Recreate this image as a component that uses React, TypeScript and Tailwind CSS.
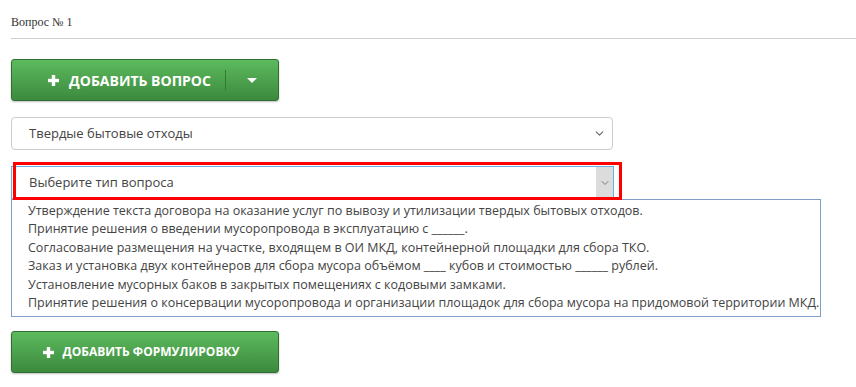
import { ChevronDown } from 'lucide-react';

const options = [
    'Утверждение текста договора на оказание услуг по вывозу и утилизации твердых бытовых отходов.',
    'Принятие решения о введении мусоропровода в эксплуатацию с ______.',
    'Согласование размещения на участке, входящем в ОИ МКД, контейнерной площадки для сбора ТКО.',
    'Заказ и установка двух контейнеров для сбора мусора объёмом ____ кубов и стоимостью ______ рублей.',
    'Установление мусорных баков в закрытых помещениях с кодовыми замками.',
    'Принятие решения о консервации мусоропровода и организации площадок для сбора мусора на придомовой территории МКД.',
];

function Plus() {
    return (
        <svg width="11" height="11" viewBox="0 0 11 11" className="shrink-0">
            <rect x="3.8" y="0" width="3.4" height="11" fill="#fff" />
            <rect x="0" y="3.8" width="11" height="3.4" fill="#fff" />
        </svg>
    );
}

function GreenButton({ children, className = '' }: { children: React.ReactNode; className?: string }) {
    return (
        <div
            className={`flex h-[42px] w-[268px] items-center rounded-[3px] border border-[#2f6f30] bg-gradient-to-b from-[#5dba5e] to-[#3c8a3d] font-['Open_Sans',sans-serif] font-bold uppercase text-white shadow-[0_1px_2px_rgba(0,0,0,0.25)] ${className}`}
        >
            {children}
        </div>
    );
}

export default function App() {
    return (
        <div className="min-h-[387px] w-[856px] bg-white pl-[11px] font-['Open_Sans',sans-serif] text-[12.5px] text-[#444]">
            <div className="pt-[14px] font-['Liberation_Serif',serif] text-[12px] leading-[16px] text-[#333]">Вопрос № 1</div>
            <div className="mt-[8px] h-px w-full bg-[#d0d0d0]" />

            <GreenButton className="mt-[20px]">
                <div className="flex flex-1 items-center justify-center gap-[10px] pl-[22px] text-[14px]">
                    <Plus />
                    <span>Добавить вопрос</span>
                </div>
                <div className="h-[20px] w-px bg-[#2f7a30]" />
                <div className="flex w-[52px] items-center justify-center">
                    <svg width="10" height="5" viewBox="0 0 10 5">
                        <path d="M0 0h10L5 5z" fill="#fff" />
                    </svg>
                </div>
            </GreenButton>

            <div className="mt-[16px] flex h-[33px] w-[602px] items-center justify-between rounded-[4px] border border-[#ccc] pl-[17px] pr-[6px] text-[13px]">
                <span>Твердые бытовые отходы</span>
                <ChevronDown size={13} strokeWidth={2} color="#666" />
            </div>

            <div className="relative mt-[16px] w-[810px]">
                <div className="flex h-[33px] w-[603px] items-stretch border border-[#66afe9] text-[13px]">
                    <span className="flex flex-1 items-center pl-[17px]">Выберите тип вопроса</span>
                    <span className="flex w-[17px] items-center justify-center bg-[#dcdcdc]">
                        <ChevronDown size={12} strokeWidth={2} color="#777" />
                    </span>
                </div>
                <div className="absolute left-[2px] top-[-4px] h-[38px] w-[609px] border-[3px] border-[#f00]" />
                <div className="border border-[#7f9dc9] pb-[4px] pl-[16px] pt-[2px] leading-[18.4px]">
                    {options.map((o) => (
                        <div key={o} className="whitespace-nowrap">
                            {o}
                        </div>
                    ))}
                </div>
            </div>

            <GreenButton className="mt-[14px] h-[41px]">
                <div className="flex flex-1 items-center justify-center gap-[9px] pr-[8px] text-[12px]">
                    <Plus />
                    <span>Добавить формулировку</span>
                </div>
            </GreenButton>
        </div>
    );
}
